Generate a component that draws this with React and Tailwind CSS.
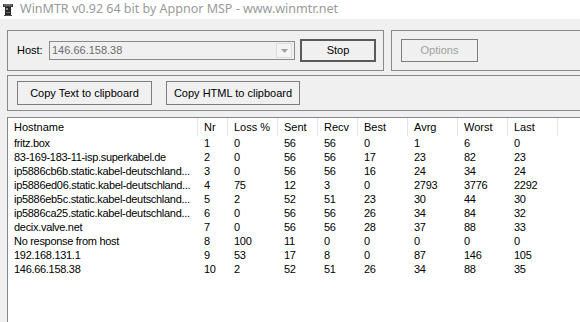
const columns = [
  { label: "Hostname", w: "w-[190px]" },
  { label: "Nr", w: "w-[30px]" },
  { label: "Loss %", w: "w-[50px]" },
  { label: "Sent", w: "w-[40px]" },
  { label: "Recv", w: "w-[40px]" },
  { label: "Best", w: "w-[50px]" },
  { label: "Avrg", w: "w-[50px]" },
  { label: "Worst", w: "w-[50px]" },
  { label: "Last", w: "w-[50px]" },
];

const rows = [
  ["fritz.box", "1", "0", "56", "56", "0", "1", "6", "0"],
  ["83-169-183-11-isp.superkabel.de", "2", "0", "56", "56", "17", "23", "82", "23"],
  ["ip5886cb6b.static.kabel-deutschland...", "3", "0", "56", "56", "16", "24", "34", "24"],
  ["ip5886ed06.static.kabel-deutschland...", "4", "75", "12", "3", "0", "2793", "3776", "2292"],
  ["ip5886eb5c.static.kabel-deutschland...", "5", "2", "52", "51", "23", "30", "44", "30"],
  ["ip5886ca25.static.kabel-deutschland...", "6", "0", "56", "56", "26", "34", "84", "32"],
  ["decix.valve.net", "7", "0", "56", "56", "28", "37", "88", "33"],
  ["No response from host", "8", "100", "11", "0", "0", "0", "0", "0"],
  ["192.168.131.1", "9", "53", "17", "8", "0", "87", "146", "105"],
  ["146.66.158.38", "10", "2", "52", "51", "26", "34", "88", "35"],
];

const AppIcon = () => (
  <svg width="10" height="12" viewBox="0 0 10 12" className="shrink-0">
    <rect x="0" y="0" width="10" height="3" fill="#3a3a3a" />
    <rect x="1" y="0.5" width="8" height="1" fill="#9a9a9a" />
    <rect x="2" y="3" width="6" height="8" fill="#2a2a2a" />
    <rect x="3" y="4" width="2" height="2" fill="#8a8a8a" />
    <rect x="3" y="8" width="4" height="1" fill="#6a6a6a" />
    <rect x="1" y="11" width="8" height="1" fill="#4a4a4a" />
  </svg>
);

function App() {
  return (
    <div className="w-[580px] h-[322px] overflow-hidden bg-[#f0f0f0] font-['Liberation_Sans',Arial,sans-serif] text-[11px] text-black">
      {/* title bar */}
      <div className="h-[19px] bg-white flex items-center pl-[3px] gap-[7px]">
        <AppIcon />
        <span className="font-['Noto_Sans','Open_Sans',sans-serif] text-[12.5px] text-[#9a9a9a] whitespace-nowrap leading-none">
          WinMTR v0.92 64 bit by Appnor MSP - www.winmtr.net
        </span>
      </div>

      <div className="pl-[7px] pt-[11px]">
        {/* host + options */}
        <div className="flex gap-[7px]">
          <div className="w-[377px] h-[41px] border border-[#8a8a8a] flex items-center pl-[9px] shrink-0">
            <span className="w-[32px]">Host:</span>
            <div className="w-[246px] h-[19px] border border-[#8a8a8a] bg-[#f0f0f0] flex items-center justify-between pl-[2px] pr-[2px]">
              <span className="text-[#6d6d6d]">146.66.158.38</span>
              <div className="w-[16px] h-[15px] border border-[#dcdcdc] bg-[#f4f4f4] flex items-center justify-center">
                <svg width="7" height="4" viewBox="0 0 7 4">
                  <path d="M0 0h7L3.5 4z" fill="#a0a0a0" />
                </svg>
              </div>
            </div>
            <div className="ml-[5px] w-[76px] h-[23px] border-2 border-[#5a5a5a] flex items-center justify-center">
              Stop
            </div>
          </div>
          <div className="w-[220px] h-[41px] border border-[#8a8a8a] flex items-center pl-[9px] shrink-0">
            <div className="w-[77px] h-[23px] border border-[#7d7d7d] flex items-center justify-center text-[#a0a0a0]">
              Options
            </div>
          </div>
        </div>

        {/* copy buttons */}
        <div className="mt-[4px] w-[600px] h-[36px] border border-[#8a8a8a] flex items-center pl-[9px] gap-[14px]">
          <div className="w-[135px] h-[24px] border border-[#7d7d7d] flex items-center justify-center">
            Copy Text to clipboard
          </div>
          <div className="w-[134px] h-[24px] border border-[#7d7d7d] flex items-center justify-center">
            Copy HTML to clipboard
          </div>
        </div>

        {/* list view */}
        <div className="mt-[6px] w-[600px] h-[220px] border-l border-t border-[#828790] bg-white">
          <div className="flex h-[18px] items-center">
            {columns.map((c) => (
              <div
                key={c.label}
                className={`${c.w} h-full border-r border-[#e5e5e5] pl-[6px] flex items-center shrink-0`}
              >
                {c.label}
              </div>
            ))}
          </div>
          {rows.map((r, i) => (
            <div key={i} className="flex h-[14px] items-center tracking-[-0.3px]">
              {r.map((v, j) => (
                <div key={j} className={`${columns[j].w} pl-[6px] shrink-0 whitespace-nowrap overflow-hidden leading-none`}>
                  {v}
                </div>
              ))}
            </div>
          ))}
        </div>
      </div>
    </div>
  );
}

export default App;
